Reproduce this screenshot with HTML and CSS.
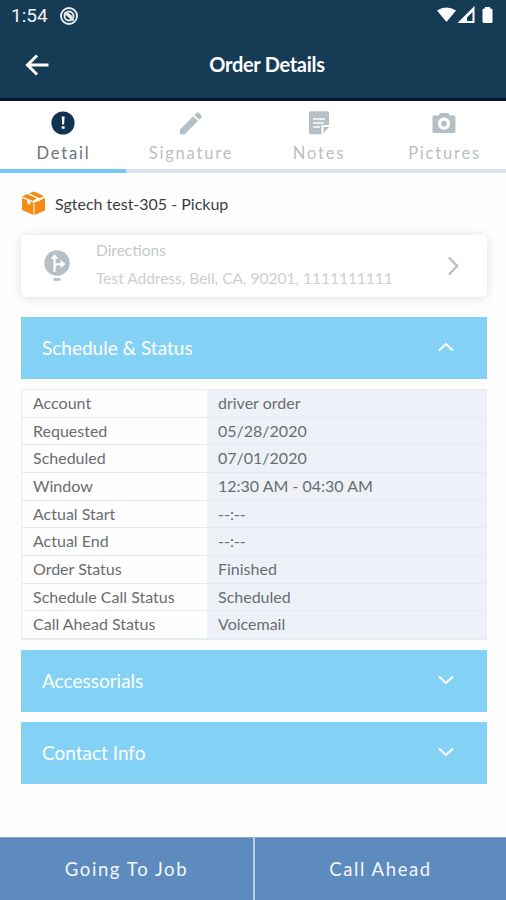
FILE: index.html
```html
<!DOCTYPE html>
<html lang="en">
<head>
<meta charset="utf-8">
<title>Order Details</title>
<link rel="stylesheet" href="styles.css">
</head>
<body>
<div class="app">
  <header class="header">
    <div class="status">
      <span class="time">1:54</span>
      <svg class="dnd" width="20" height="20" viewBox="0 0 20 20" fill="none" stroke="#e8edf2"><circle cx="10" cy="10" r="8" stroke-width="1.9"/><circle cx="10" cy="10" r="4.5" stroke-width="1.9"/><path d="M5.5 6.5l9 8M8 7l5 4" stroke-width="2"/></svg>
      <svg class="signals" width="60" height="20" viewBox="0 0 60 20" fill="#fff"><path d="M0 4.5Q9.500-1.500 19 4.500L9.500 16z"/><path fill-rule="evenodd" d="M37.500 0v17H20.500zM35.500 6L30 11.500V15h5.500z"/><path d="M48 1h5v1.500h1q1.500 0 1.500 1.500v11.500q0 1.500-1.500 1.500h-7q-1.500 0-1.500-1.500V4q0-1.500 1.500-1.500h1z"/></svg>
    </div>
    <div class="titlebar">
      <svg class="back" width="24" height="22" viewBox="0 0 24 22" fill="none" stroke="#fff" stroke-width="3"><path d="M23.500 11H2.500M12 1.500L2.500 11l9.500 9.500"/></svg>
      <h1 class="title">Order Details</h1>
    </div>
  </header>
  <nav class="tabs">
    <div class="tab active">
      <svg width="26" height="26" viewBox="0 0 26 26"><circle cx="13" cy="13" r="11.600" fill="#123450"/><path d="M11.700 6.500h2.900l-.5 8h-1.900zM11.700 16.300h2.900v2.500h-2.900z" fill="#fff"/></svg>
      <span>Detail</span>
    </div>
    <div class="tab signature">
      <svg width="26" height="26" viewBox="0 0 26 26" fill="#b5bfc5"><path d="M2 19.500L15.200 6.300l4.700 4.700L6.700 24.200H2zM16.500 5l2.200-2.200q1-1 2 0l2.700 2.700q1 1 0 2l-2.200 2.200z"/></svg>
      <span>Signature</span>
    </div>
    <div class="tab notes">
      <svg width="26" height="26" viewBox="0 0 26 26"><path d="M4.500 1.200h17q1.500 0 1.500 1.500V15h-7.500v9.300h-11Q3 24.300 3 22.800V2.700q0-1.500 1.500-1.500zM17.500 17H23l-5.500 6z" fill="#b5bfc5"/><path d="M7 9h12M7 13h11M7 17h7" stroke="#fff" stroke-width="1.300"/></svg>
      <span>Notes</span>
    </div>
    <div class="tab pictures">
      <svg width="26" height="26" viewBox="0 0 26 26"><path d="M3 5.500h4.500L9.200 3h8l1.700 2.500h4q1.500 0 1.500 1.500v14.500q0 1.500-1.500 1.500H3q-1.500 0-1.500-1.500V7q0-1.500 1.500-1.500z" fill="#b5bfc5"/><circle cx="13" cy="13.700" r="4.500" fill="#b5bfc5" stroke="#fff" stroke-width="3.300"/></svg>
      <span>Pictures</span>
    </div>
  </nav>
  <main class="content">
    <div class="order">
      <svg width="24" height="24" viewBox="0 0 24 24"><path d="M1 7l11.500 4.500V24L1 19zM13.500 11.500L24 7v12.500L13.500 24zM1 5.500L6 3l10 4-4 3zM8 2.500L13 .5 23 5l-5 2.500zM23.500 5.500L14 10l4-2z" fill="#f68b13"/><path d="M7 2.800l11 4.700v3" fill="none" stroke="#fff" stroke-width="1.200"/><path d="M6 8.500l3.500 1.300v4L6 12.300z" fill="#fff"/></svg>
      <span>Sgtech test-305 - Pickup</span>
    </div>
    <section class="directions">
      <svg class="pin" width="26" height="32" viewBox="0 0 26 32"><circle cx="13" cy="13" r="12.700" fill="#b5bfc5"/><path d="M10.500 22V8M11 17q0-3 4-3h3" fill="none" stroke="#fff" stroke-width="2.200"/><path d="M6.500 9l4-5 4 5zM16.500 9.800l5 4.200-5 4.200z" fill="#fff"/><path d="M9.500 28h7v2.800h-7z" fill="#b5bfc5"/></svg>
      <div class="address">
        <span class="label">Directions</span>
        <span class="line">Test Address, Bell, CA, 90201, 1111111111</span>
      </div>
      <svg class="go" width="12" height="20" viewBox="0 0 12 20" fill="none" stroke="#b8bdc1" stroke-width="2.300"><path d="M2 1.500L10.200 10 2 18.500"/></svg>
    </section>
    <section class="panel">
      <span class="schedule">Schedule &amp; Status</span>
      <svg width="16" height="10" viewBox="0 0 16 10" fill="none" stroke="#fff" stroke-width="2"><path d="M1 8.500l7-6.500 7 6.500"/></svg>
    </section>
    <dl class="details">
      <dt class="t1">Account</dt><dd>driver order</dd>
      <dt>Requested</dt><dd>05/28/2020</dd>
      <dt>Scheduled</dt><dd>07/01/2020</dd>
      <dt>Window</dt><dd class="window">12:30 AM - 04:30 AM</dd>
      <dt>Actual Start</dt><dd>--:--</dd>
      <dt>Actual End</dt><dd>--:--</dd>
      <dt>Order Status</dt><dd>Finished</dd>
      <dt>Schedule Call Status</dt><dd>Scheduled</dd>
      <dt>Call Ahead Status</dt><dd>Voicemail</dd>
    </dl>
    <section class="panel">
      <span class="accessorials">Accessorials</span>
      <svg width="16" height="10" viewBox="0 0 16 10" fill="none" stroke="#fff" stroke-width="2"><path d="M1 1.500L8 8l7-6.500"/></svg>
    </section>
    <section class="panel">
      <span class="contact">Contact Info</span>
      <svg width="16" height="10" viewBox="0 0 16 10" fill="none" stroke="#fff" stroke-width="2"><path d="M1 1.500L8 8l7-6.500"/></svg>
    </section>
  </main>
  <footer class="actions">
    <div class="action going">Going To Job</div>
    <div class="action ahead">Call Ahead</div>
  </footer>
</div>
</body>
</html>
```

FILE: styles.css
```css
* { box-sizing: border-box; }
body { margin: 0; font-family: Lato, "Liberation Sans", sans-serif; background: #fefefe; }
svg { display: block; flex: none; }
.app { width: 506px; height: 900px; display: flex; flex-direction: column; overflow: hidden; }

.header { height: 101px; flex: none; background: #153c54; border-bottom: 3px solid #041338; color: #fff; }
.status { height: 32px; display: flex; align-items: center; padding: 0 9px 0 11px; }
.time { font: 19px/32px Roboto, sans-serif; width: 48px; color: #f0f3f5; }
.signals { margin: 0 0 0 auto; }
.titlebar { height: 66px; display: grid; grid-template-columns: 40px 1fr 40px; align-items: center; padding: 0 0 0 25px; }
.title { margin: 0 0 2px; font-size: 20px; line-height: 26px; font-weight: 700; letter-spacing: -.3px; text-align: center; padding-left: 3px; }

.tabs { height: 72px; flex: none; display: grid; grid-template-columns: 126px 129px 127px 124px; background: #fff; }
.tab { display: flex; flex-direction: column; align-items: center; padding-top: 9px; border-bottom: 4px solid #dbe2ee; color: #b9bfc4; font-size: 16.500px; line-height: 24px; letter-spacing: 1.800px; }
.tab span { margin: 5px 0 0 1px; }
.tab.active { border-color: #74c9f3; color: #69747c; }

.content { flex: 1; padding: 0 19px 0 21px; display: flex; flex-direction: column; }
.order { height: 62px; display: flex; align-items: center; gap: 10px; font-size: 16px; color: #3c4043; padding-bottom: 2px; }
.directions { height: 62px; flex: none; display: flex; align-items: center; padding: 0 28px 0 23px; border-radius: 5px; background: #fff; box-shadow: 0 1px 12px rgba(0,0,0,.13); color: #cdcfd1; }
.address { width: 330px; margin-left: 26px; display: flex; flex-direction: column; font-size: 15.500px; line-height: 28px; padding-bottom: 4px; }
.address .label { color: #c5c8cb; }
.go { margin-left: auto; }
.panel { height: 62px; flex: none; display: flex; align-items: center; justify-content: space-between; padding: 0 33px 2px 21px; background: #83d2f6; color: #fff; font-size: 19px; }
.directions + .panel { margin-top: 20px; }
.panel + .panel { margin-top: 10px; }
.details { margin: 10px 0; height: 251px; flex: none; display: grid; grid-template-columns: 185px 1fr; grid-template-rows: repeat(9, 1fr); border: 1px solid #e8edf3; color: #6a6d70; font-size: 16px; line-height: 26px; }
.details dt, .details dd { margin: 0; border-bottom: 1px solid #e5eaf1; padding-left: 11px; white-space: nowrap; }
.details dd { background: #eef2f8; }

.actions { height: 63px; flex: none; display: grid; grid-template-columns: 253px 253px; background: #5d8abf; color: #f3f7fb; font-size: 18.500px; letter-spacing: 1.600px; }
.action { display: flex; align-items: center; justify-content: center; border-top: 1px solid #8ba9ce; }
.action + .action { border-left: 2px solid #b9cbe2; }
```
